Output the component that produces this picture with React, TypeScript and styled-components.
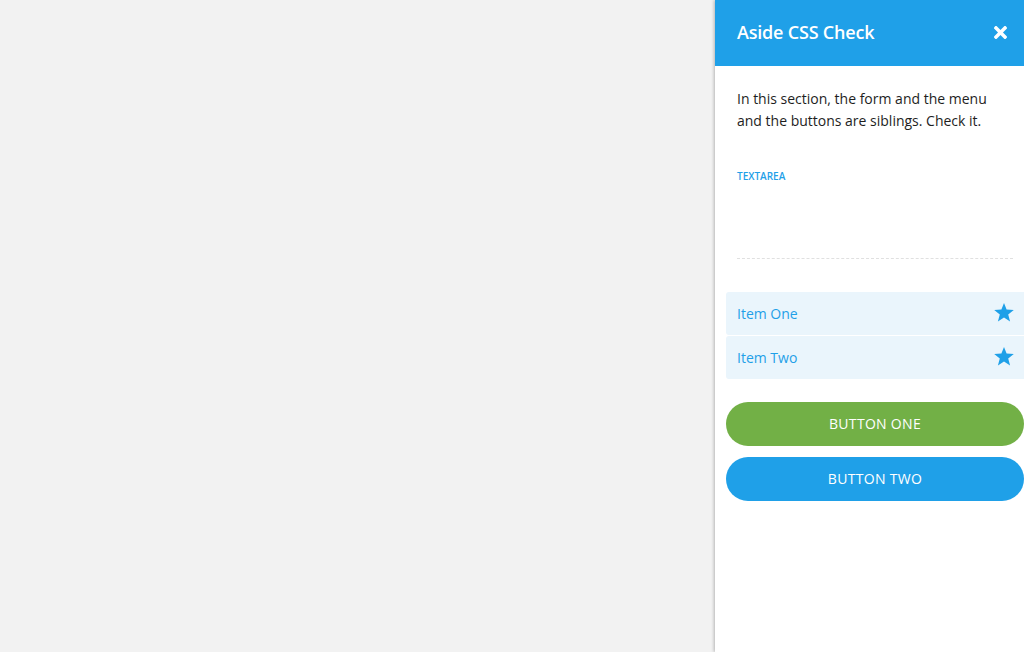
import React from "react";
import styled, { createGlobalStyle } from "styled-components";
import { FaTimes } from "react-icons/fa";

const Global = createGlobalStyle`
  html, body { margin: 0; padding: 0; height: 100%; }
  body {
    background: #f2f2f2;
    font-family: "Open Sans", "Noto Sans", sans-serif;
    overflow: hidden;
  }
  #root { height: 100%; }
`;

const Page = styled.div`
  display: flex;
  justify-content: flex-end;
  height: 652px;
`;

const Aside = styled.aside`
  width: 309px;
  height: 100%;
  background: #ffffff;
  box-shadow: -1px 0 3px rgba(0, 0, 0, 0.25);
  display: flex;
  flex-direction: column;
`;

const Header = styled.header`
  height: 66px;
  background: #1fa0e8;
  display: flex;
  align-items: center;
  justify-content: space-between;
  padding: 0 14px 2px 22px;
  box-sizing: border-box;
`;

const Title = styled.h2`
  margin: 0;
  font-size: 18px;
  font-weight: 600;
  color: #ffffff;
  letter-spacing: -0.2px;
`;

const Close = styled.button`
  border: 0;
  background: none;
  padding: 0;
  color: #ffffff;
  display: flex;
  cursor: pointer;
`;

const Intro = styled.p`
  margin: 22px 22px 0 22px;
  font-size: 14px;
  line-height: 22px;
  color: #1e1e1e;
`;

const Form = styled.form`
  margin: 37px 11px 0 22px;
  display: flex;
  flex-direction: column;
`;

const Label = styled.label`
  font-size: 10px;
  font-weight: 600;
  color: #1fa0e8;
  text-transform: uppercase;
  line-height: 14px;
`;

const TextArea = styled.textarea`
  height: 75px;
  border: 0;
  border-bottom: 1px dashed #e0e0e0;
  resize: none;
  outline: none;
  background: transparent;
  font-family: inherit;
  padding: 0;
  margin: 0;
`;

const Menu = styled.ul`
  list-style: none;
  margin: 33px 0 0 11px;
  padding: 0;
  display: flex;
  flex-direction: column;
  gap: 1px;
`;

const MenuItem = styled.li`
  height: 43px;
  background: #eaf5fc;
  display: flex;
  align-items: center;
  justify-content: space-between;
  padding: 0 10px 0 11px;
  font-size: 14px;
  color: #1fa0e8;
  border-radius: 3px 0 0 3px;
`;

const StarIcon = styled.svg`
  width: 20px;
  height: 19px;
  margin-top: -3px;
  fill: #1fa0e8;
`;

const Buttons = styled.div`
  margin: 23px 0 0 11px;
  display: flex;
  flex-direction: column;
  gap: 11px;
`;

const Button = styled.button<{ $tone: "green" | "blue" }>`
  height: 44px;
  border: 0;
  border-radius: 22px;
  padding: 0 0 2px 0;
  background: ${(p) => (p.$tone === "green" ? "#72b046" : "#1fa0e8")};
  color: #ffffff;
  font-family: inherit;
  font-size: 14px;
  text-transform: uppercase;
  letter-spacing: 0.3px;
  cursor: pointer;
`;

const Star = () => (
  <StarIcon viewBox="0 0 20 19">
    <polygon points="10,0 12.6,6.6 19.8,6.9 14.2,11.4 16.1,18.5 10,14.5 3.9,18.5 5.8,11.4 0.2,6.9 7.4,6.6" />
  </StarIcon>
);

export default function App() {
  return (
    <>
      <Global />
      <Page>
        <Aside>
          <Header>
            <Title>Aside CSS Check</Title>
            <Close aria-label="close">
              <FaTimes size={19} />
            </Close>
          </Header>
          <Intro>
            In this section, the form and the menu and the buttons are siblings. Check it.
          </Intro>
          <Form>
            <Label htmlFor="ta">Textarea</Label>
            <TextArea id="ta" />
          </Form>
          <Menu>
            <MenuItem>
              Item One
              <Star />
            </MenuItem>
            <MenuItem>
              Item Two
              <Star />
            </MenuItem>
          </Menu>
          <Buttons>
            <Button $tone="green">Button One</Button>
            <Button $tone="blue">Button Two</Button>
          </Buttons>
        </Aside>
      </Page>
    </>
  );
}
